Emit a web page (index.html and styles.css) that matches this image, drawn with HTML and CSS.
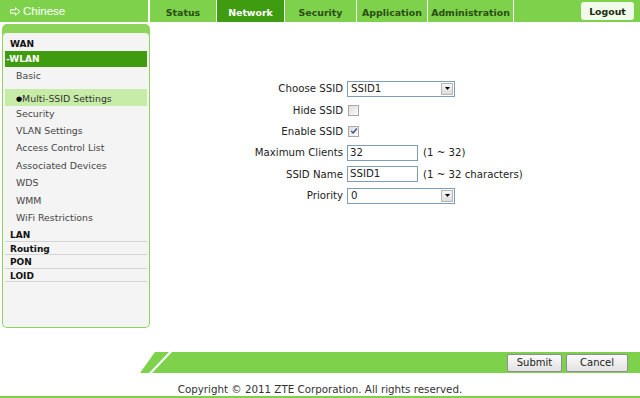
FILE: index.html
```html
<!DOCTYPE html>
<html lang="en">
<head>
    <meta charset="UTF-8">
    <title>Network - WLAN</title>
    <link rel="stylesheet" href="styles.css">
</head>
<body>
    <div class="top">
        <div class="lang">
            <svg class="arrow" width="11" height="9" viewBox="0 0 11 9"><path d="M0.5 2.8 H5.5 V0.8 L10 4.5 L5.5 8.2 V6.2 H0.5 Z" fill="none" stroke="#fff" stroke-width="1"/></svg>Chinese
        </div>
        <ul class="tabs">
            <li class="t1">Status</li>
            <li class="t2 on">Network</li>
            <li class="t3">Security</li>
            <li class="t4">Application</li>
            <li class="t5">Administration</li>
        </ul>
        <div class="fill"><span class="logout">Logout</span></div>
    </div>

    <div class="main">
        <div class="side">
            <div class="panel">
                <ul class="menu">
                    <li class="head">WAN</li>
                    <li class="head open">-WLAN</li>
                    <li class="sub first">Basic</li>
                    <li class="sub cur"><span class="dot">&#9679;</span>Multi-SSID Settings</li>
                    <li class="sub">Security</li>
                    <li class="sub">VLAN Settings</li>
                    <li class="sub">Access Control List</li>
                    <li class="sub">Associated Devices</li>
                    <li class="sub">WDS</li>
                    <li class="sub">WMM</li>
                    <li class="sub">WiFi Restrictions</li>
                    <li class="head line lan">LAN</li>
                    <li class="head line">Routing</li>
                    <li class="head line">PON</li>
                    <li class="head line">LOID</li>
                </ul>
            </div>
        </div>

        <div class="content">
            <div class="form">
                <label>Choose SSID</label>
                <div class="field"><div class="sel"><span>SSID1</span><span class="drop"><svg width="5" height="3" viewBox="0 0 5 3"><path d="M0 0 H5 L2.5 3 Z" fill="#000"/></svg></span></div></div>

                <label>Hide SSID</label>
                <div class="field"><span class="chk"></span></div>

                <label>Enable SSID</label>
                <div class="field"><span class="chk"><svg width="8" height="8" viewBox="0 0 8 8"><path d="M1.2 4 L3.2 6 L6.8 1.5" fill="none" stroke="#3b4f8c" stroke-width="1.4"/></svg></span></div>

                <label>Maximum Clients</label>
                <div class="field"><span class="txt">32</span><span class="hint">(1 ~ 32)</span></div>

                <label>SSID Name</label>
                <div class="field"><span class="txt">SSID1</span><span class="hint">(1 ~ 32 characters)</span></div>

                <label>Priority</label>
                <div class="field"><div class="sel"><span>0</span><span class="drop"><svg width="5" height="3" viewBox="0 0 5 3"><path d="M0 0 H5 L2.5 3 Z" fill="#000"/></svg></span></div></div>
            </div>
        </div>
    </div>

    <div class="bar">
        <svg class="slant" width="35" height="21" viewBox="0 0 35 21">
            <polygon points="15,0 29,0 9,21 0,21" fill="#7ed24b"/>
            <polygon points="32,0 35,0 35,21 12,21" fill="#7ed24b"/>
        </svg>
        <div class="btns">
            <button class="btn">Submit</button>
            <button class="btn">Cancel</button>
        </div>
    </div>

    <div class="copy">Copyright &copy; 2011 ZTE Corporation. All rights reserved.</div>
    <div class="baseline"></div>
</body>
</html>
```

FILE: styles.css
```css
body{
    margin: 0;
    width: 640px;
    height: 398px;
    overflow: hidden;
    background: #fff;
    font-family: "DejaVu Sans", Verdana, sans-serif;
    color: #222;
}
ul{
    list-style: none;
    margin: 0;
    padding: 0;
}

/* header */
.top{
    display: flex;
    height: 22px;
    background: #7ed24b;
}
.lang{
    width: 150px;
    border-right: 2px solid #fff;
    display: flex;
    align-items: center;
    padding-left: 10px;
    box-sizing: border-box;
    color: #fff;
    font-family: "Liberation Sans", Arial, sans-serif;
    font-size: 11.5px;
}
.lang .arrow{
    margin-right: 2px;
}
.tabs{
    display: flex;
}
.tabs li{
    border-right: 1px solid #fff;
    display: flex;
    align-items: center;
    justify-content: center;
    font-size: 9.4px;
    font-weight: bold;
    color: #2a4d14;
    padding-top: 2px;
    box-sizing: border-box;
}
.tabs .t1{ width: 67px; }
.tabs .t2{ width: 68px; }
.tabs .t3{ width: 72px; }
.tabs .t4{ width: 71px; }
.tabs .t5{ width: 86px; }
.tabs li.on{
    background: #3f9b10;
    color: #fff;
}
.fill{
    flex: 1;
    display: flex;
    justify-content: flex-end;
    padding: 2px 6px 2px 0;
}
.logout{
    width: 53px;
    background: #f1fbe9;
    border-radius: 3px;
    font-size: 9.4px;
    font-weight: bold;
    color: #1d2a12;
    display: flex;
    align-items: center;
    justify-content: center;
}

/* sidebar */
.main{
    display: flex;
    padding: 2px 0 0 2px;
}
.side{
    width: 148px;
    height: 304px;
    box-sizing: border-box;
    background: #8cd45a;
    border-radius: 5px;
    padding: 9px 1px 1px 1px;
}
.panel{
    height: 100%;
    background: #f4f4f4;
    border-radius: 4px;
    padding: 4px 2px 0 2px;
    box-sizing: border-box;
}
.menu .head{
    font-size: 9px;
    font-weight: bold;
    color: #111;
    padding-left: 5px;
    height: 14px;
    line-height: 14px;
}
.menu .open{
    background: #3f9b10;
    color: #fff;
    padding-left: 1px;
    height: 16px;
    line-height: 16px;
}
.menu .line{
    height: 13.4px;
    box-sizing: border-box;
    padding-top: 2px;
    line-height: 10.4px;
    border-bottom: 1px solid #d4d4d4;
}
.menu .lan{
    margin-top: 2px;
}
.menu .sub{
    font-size: 9.4px;
    color: #444;
    padding-left: 11px;
    height: 17.4px;
    line-height: 17.4px;
}
.menu .first{
    height: 18px;
    line-height: 18px;
}
.menu .cur{
    background: #c6eca7;
    margin-top: 4px;
    height: 17px;
    line-height: 12px;
    padding-top: 4px;
    box-sizing: border-box;
    color: #333;
}
.menu .cur + .sub{
    height: 16px;
    line-height: 16px;
}
.dot{
    font-size: 7px;
    color: #000;
    position: relative;
    top: -1px;
}

/* form */
.content{
    flex: 1;
    padding: 54px 0 0 73px;
}
.form{
    display: grid;
    grid-template-columns: 120px auto;
    grid-auto-rows: 21.4px;
    column-gap: 4px;
    align-items: center;
    font-size: 10.2px;
    color: #222;
}
.form label{
    text-align: right;
}
.field{
    display: flex;
    align-items: center;
}
.sel{
    width: 108px;
    height: 16px;
    box-sizing: border-box;
    border: 1px solid #7f9db9;
    background: #fff;
    display: flex;
    align-items: center;
    justify-content: space-between;
    padding-left: 3px;
}
.drop{
    width: 12px;
    height: 12px;
    margin-right: 1px;
    box-sizing: border-box;
    border: 1px solid #b5b5b5;
    background: linear-gradient(#f6f6f6, #dcdcdc);
    display: flex;
    align-items: center;
    justify-content: center;
}
.chk{
    width: 11px;
    height: 11px;
    box-sizing: border-box;
    margin-left: 1px;
    border: 1px solid #a8a8a8;
    background: linear-gradient(135deg, #dedede, #fafafa);
    display: flex;
    align-items: center;
    justify-content: center;
}
.txt{
    width: 71px;
    height: 16px;
    box-sizing: border-box;
    border: 1px solid #7f9db9;
    padding-left: 2px;
    line-height: 14px;
}
.hint{
    margin-left: 5px;
}

/* bottom */
.bar{
    display: flex;
    height: 21px;
    margin: 24px 0 0 140px;
}
.btns{
    flex: 1;
    background: #7ed24b;
    display: flex;
    justify-content: flex-end;
    align-items: center;
    gap: 4px;
    padding-right: 12px;
}
.btn{
    height: 18px;
    padding: 0;
    border: 1px solid #8f8f8f;
    border-radius: 2px;
    background: linear-gradient(#fbfbfb, #e2e2e2);
    font-family: "DejaVu Sans", Verdana, sans-serif;
    font-size: 10px;
    color: #222;
}
.btn:first-child{ width: 55px; }
.btn:last-child{ width: 62px; }
.copy{
    text-align: center;
    font-size: 10.3px;
    color: #333;
    padding-top: 9px;
    line-height: 14px;
}
.baseline{
    height: 2px;
    background: #7ed24b;
}
```
